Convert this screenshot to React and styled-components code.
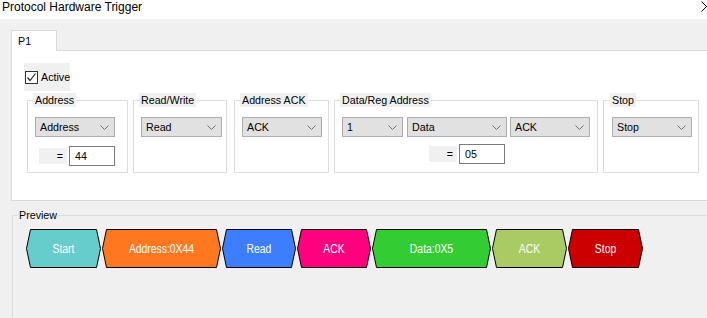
import React from "react";
import styled, { createGlobalStyle } from "styled-components";

const Global = createGlobalStyle`
  html, body { margin: 0; padding: 0; background: #f0f0f0; }
  body { font-family: "Liberation Sans", Arial, sans-serif; color: #000; }
  * { box-sizing: border-box; }
`;

const Window = styled.div`
  width: 707px;
  height: 318px;
  overflow: hidden;
  background: #f0f0f0;
  display: flex;
  flex-direction: column;
`;

const TitleBar = styled.div`
  height: 19px;
  background: #ffffff;
  display: flex;
  justify-content: space-between;
  align-items: flex-start;
  padding-left: 2px;
  font-size: 12px;
  line-height: 14px;
  flex-shrink: 0;
`;

const CloseIcon = styled.svg`
  width: 11px;
  height: 11px;
  margin-top: 1px;
  margin-right: -5px;
  flex-shrink: 0;
`;

const TabStrip = styled.div`
  display: flex;
  padding: 11px 0 0 11px;
  position: relative;
  z-index: 1;
`;

const Tab = styled.div`
  width: 46px;
  height: 21px;
  margin-bottom: -1px;
  background: #ffffff;
  border: 1px solid #d9d9d9;
  border-bottom: none;
  font-size: 10.7px;
  line-height: 13px;
  padding: 4px 0 0 6px;
`;

const Panel = styled.div`
  margin-left: 11px;
  height: 151px;
  background: #ffffff;
  border: 1px solid #d9d9d9;
  border-right: none;
  padding: 12px 0 0 12px;
  display: flex;
  flex-direction: column;
  flex-shrink: 0;
`;

const CheckRow = styled.label`
  display: flex;
  align-items: center;
  width: 46px;
  height: 28px;
  background: #f0f0f0;
  padding-left: 1px;
  gap: 3px;
  font-size: 10.7px;
`;

const CheckBox = styled.span`
  width: 13px;
  height: 13px;
  border: 1px solid #333333;
  background: #ffffff;
  display: flex;
  align-items: center;
  justify-content: center;
`;

const GroupRow = styled.div`
  display: flex;
  margin: 2px 0 0 3px;
`;

const Group = styled.fieldset`
  margin: 0 ${(p) => p.$gap}px 0 0;
  width: ${(p) => p.$w}px;
  height: 80px;
  border: 1px solid #dcdcdc;
  padding: 10px 0 0 ${(p) => p.$pad}px;
  min-width: 0;
  display: flex;
  flex-direction: column;
  align-items: flex-start;
`;

const Legend = styled.legend`
  font-size: 10.7px;
  line-height: 14px;
  background: #f0f0f0;
  padding: 0 2px;
  margin-left: -2px;
`;

const ComboRow = styled.div`
  display: flex;
`;

const Combo = styled.div`
  width: ${(p) => p.$w}px;
  height: 20px;
  background: #e1e1e1;
  border: 1px solid #adadad;
  display: flex;
  align-items: center;
  justify-content: space-between;
  padding: 0 5px 0 4px;
  font-size: 10.7px;
  margin-right: ${(p) => p.$mr || 0}px;
`;

const Chevron = styled.svg`
  width: 9px;
  height: 5px;
  flex-shrink: 0;
`;

const ValueRow = styled.div`
  display: flex;
  align-items: center;
  gap: 2px;
  margin: ${(p) => p.$mt}px 0 0 ${(p) => p.$ml}px;
`;

const EqLabel = styled.span`
  width: 28px;
  height: 16px;
  background: #f0f0f0;
  font-size: 10.7px;
  line-height: 16px;
  text-align: right;
  padding-right: 4px;
`;

const TextBox = styled.div`
  width: 46px;
  height: 20px;
  border: 1px solid #7a7a7a;
  background: #ffffff;
  font-size: 10.7px;
  line-height: 18px;
  padding-left: 5px;
`;

const PreviewBox = styled.fieldset`
  margin: 7px 0 0 12px;
  border: 1px solid #dcdcdc;
  border-right: none;
  border-bottom: none;
  padding: 7px 0 0 5px;
  flex: 1;
  min-width: 0;
`;

const PreviewLegend = styled.legend`
  font-size: 10.7px;
  line-height: 14px;
  padding: 0 1px;
`;

const Wave = styled.div`
  display: flex;
  gap: 1px;
  margin-left: 8px;
`;

const Segment = styled.div`
  position: relative;
  width: ${(p) => p.$w}px;
  height: 39px;
  flex-shrink: 0;
`;

const SegShape = styled.svg`
  position: absolute;
  inset: 0;
`;

const SegText = styled.span`
  position: absolute;
  inset: 0;
  display: flex;
  align-items: center;
  justify-content: center;
  color: #ffffff;
  font-family: "Liberation Sans", Arial, sans-serif;
  font-size: 12.5px;
  transform: scaleX(0.83);
`;

const ChevronIcon = () => (
  <Chevron viewBox="0 0 9 5">
    <polyline points="0.5,0.5 4.5,4.5 8.5,0.5" fill="none" stroke="#707070" strokeWidth="1" />
  </Chevron>
);

const Select = ({ w, children, mr }) => (
  <Combo $w={w} $mr={mr}>
    <span>{children}</span>
    <ChevronIcon />
  </Combo>
);

const segments = [
  { label: "Start", w: 75, color: "#66cccc" },
  { label: "Address:0X44", w: 119, color: "#ff781f" },
  { label: "Read", w: 74, color: "#3d7efe" },
  { label: "ACK", w: 74, color: "#ff007f" },
  { label: "Data:0X5", w: 119, color: "#33cc33" },
  { label: "ACK", w: 75, color: "#aacb64" },
  { label: "Stop", w: 75, color: "#cc0000" },
];

const Hex = ({ w, color, label }) => {
  const h = 38;
  const i = 4;
  const r = w - 0.5;
  const pts = `${0.5 + i},0.5 ${r - i},0.5 ${r},${h / 2 + 0.5} ${r - i},${h + 0.5} ${0.5 + i},${h + 0.5} 0.5,${h / 2 + 0.5}`;
  return (
    <Segment $w={w}>
      <SegShape width={w} height={h + 1}>
        <polygon points={pts} fill={color} stroke="#000" strokeWidth="1" />
      </SegShape>
      <SegText>{label}</SegText>
    </Segment>
  );
};

export default function App() {
  return (
    <>
      <Global />
      <Window>
        <TitleBar>
          <span>Protocol Hardware Trigger</span>
          <CloseIcon viewBox="0 0 11 11">
            <path d="M0.5 0.5 L10.5 10.5 M10.5 0.5 L0.5 10.5" stroke="#000" strokeWidth="1" />
          </CloseIcon>
        </TitleBar>
        <TabStrip>
          <Tab>P1</Tab>
        </TabStrip>
        <Panel>
          <CheckRow>
            <CheckBox>
              <svg width="11" height="11" viewBox="0 0 11 11">
                <polyline points="1.5,5.5 4,8.5 9.5,1.5" fill="none" stroke="#222" strokeWidth="1.2" />
              </svg>
            </CheckBox>
            Active
          </CheckRow>
          <GroupRow>
            <Group $w={101} $gap={5} $pad={7}>
              <Legend>Address</Legend>
              <Select w={80}>Address</Select>
              <ValueRow $mt={9} $ml={4}>
                <EqLabel>=</EqLabel>
                <TextBox>44</TextBox>
              </ValueRow>
            </Group>
            <Group $w={94} $gap={7} $pad={7}>
              <Legend>Read/Write</Legend>
              <Select w={81}>Read</Select>
            </Group>
            <Group $w={95} $gap={5} $pad={7}>
              <Legend>Address ACK</Legend>
              <Select w={80}>ACK</Select>
            </Group>
            <Group $w={264} $gap={5} $pad={7}>
              <Legend>Data/Reg Address</Legend>
              <ComboRow>
                <Select w={61} mr={4}>1</Select>
                <Select w={100} mr={3}>Data</Select>
                <Select w={80}>ACK</Select>
              </ComboRow>
              <ValueRow $mt={7} $ml={87}>
                <EqLabel>=</EqLabel>
                <TextBox>05</TextBox>
              </ValueRow>
            </Group>
            <Group $w={96} $gap={0} $pad={8}>
              <Legend>Stop</Legend>
              <Select w={80}>Stop</Select>
            </Group>
          </GroupRow>
        </Panel>
        <PreviewBox>
          <PreviewLegend>Preview</PreviewLegend>
          <Wave>
            {segments.map((s, k) => (
              <Hex key={k} {...s} />
            ))}
          </Wave>
        </PreviewBox>
      </Window>
    </>
  );
}
